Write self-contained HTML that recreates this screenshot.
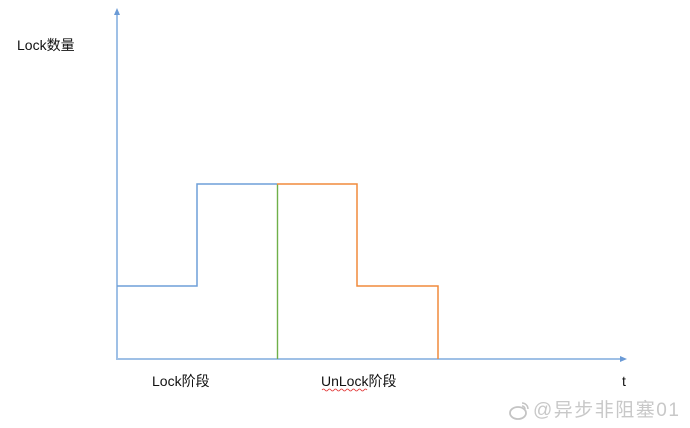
<!DOCTYPE html>
<html><head><meta charset="utf-8"><style>
body{margin:0;width:690px;height:428px;background:#fff;position:relative;overflow:hidden;font-family:"Liberation Sans","Noto Sans CJK SC",sans-serif;}
.t{position:absolute;font-size:14px;color:#111;line-height:16px;white-space:nowrap;}
</style></head><body>
<svg width="690" height="428" style="position:absolute;left:0;top:0">
<line x1="117" y1="14" x2="117" y2="359" stroke="#9fc0e6" stroke-width="2"/>
<polygon points="117,8 114,15 120,15" fill="#6a9ad6"/>
<line x1="116" y1="359" x2="621" y2="359" stroke="#9fc0e6" stroke-width="2"/>
<polygon points="627,359 620,356 620,362" fill="#6a9ad6"/>
<polyline points="117,286 197,286 197,184 277,184" fill="none" stroke="#6f9fd8" stroke-width="1.5"/>
<line x1="277.5" y1="184" x2="277.5" y2="359" stroke="#6fb04a" stroke-width="1.4"/>
<polyline points="277,184 357,184 357,286 438,286 438,359" fill="none" stroke="#f08a3c" stroke-width="1.5"/>
<path d="M322 390 q1.5 -2 3 0 t3 0 t3 0 t3 0 t3 0 t3 0 t3 0 t3 0 t3 0 t3 0 t3 0 t3 0 t3 0 t3 0 t3 0" fill="none" stroke="#e03030" stroke-width="0.8"/>
<ellipse cx="518" cy="413" rx="8" ry="6" fill="none" stroke="#c4c4c4" stroke-width="1.8"/>
<path d="M522 403 a6 6 0 0 1 6 6 M522 406 a3 3 0 0 1 3 3" fill="none" stroke="#c4c4c4" stroke-width="1.5"/>
</svg>
<div class="t" style="left:17px;top:37px">Lock数量</div>
<div class="t" style="left:152px;top:373px">Lock阶段</div>
<div class="t" style="left:321px;top:373px">UnLock阶段</div>
<div class="t" style="left:622px;top:373px">t</div>
<div class="t" style="left:533px;top:400px;font-size:19px;line-height:22px;letter-spacing:1.5px;color:#c8c8c8">@异步非阻塞01</div>
</body></html>
